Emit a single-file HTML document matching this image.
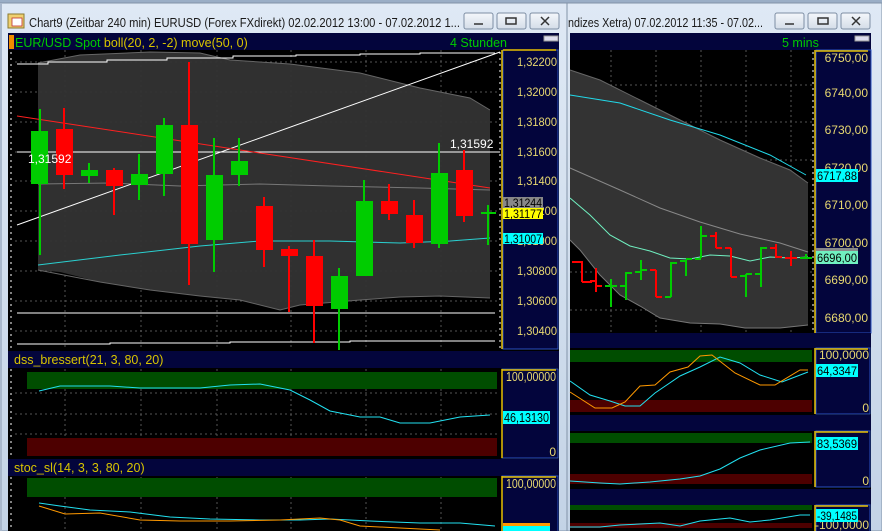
<!DOCTYPE html>
<html><head><meta charset="utf-8"><style>
html,body{margin:0;padding:0;background:#c8d6e6;}
svg{display:block;}
text{font-family:"Liberation Sans",sans-serif;}
</style></head><body>
<svg width="882" height="531" viewBox="0 0 882 531" xmlns="http://www.w3.org/2000/svg">
<defs>
<linearGradient id="tb" x1="0" y1="0" x2="0" y2="1"><stop offset="0" stop-color="#dfe9f5"/><stop offset="1" stop-color="#c3d3e6"/></linearGradient>
<linearGradient id="btn" x1="0" y1="0" x2="0" y2="1"><stop offset="0" stop-color="#f4f7fb"/><stop offset="1" stop-color="#d4dde8"/></linearGradient>
</defs>
<rect width="882" height="531" fill="#cdd9e7"/>
<rect x="0" y="0" width="882" height="4" fill="#9aaec6"/>
<rect x="560" y="3" width="322" height="528" fill="url(#tb)" stroke="#8293a8"/>
<rect x="0" y="3" width="567" height="528" fill="url(#tb)" stroke="#8293a8"/>
<rect x="0" y="3" width="2" height="528" fill="#a9b8cc"/>
<rect x="8" y="14" width="16" height="14" fill="#f0d070" stroke="#8a7a30"/>
<rect x="12" y="18" width="10" height="8" fill="#fff" stroke="#c03030" stroke-width="0.8"/>
<text x="29" y="27" font-size="13" fill="#1a1a1a" textLength="431" lengthAdjust="spacingAndGlyphs">Chart9 (Zeitbar 240 min)  EURUSD (Forex FXdirekt) 02.02.2012 13:00 - 07.02.2012 1...</text>
<text x="568" y="27" font-size="13" fill="#1a1a1a" textLength="195" lengthAdjust="spacingAndGlyphs">ndizes Xetra) 07.02.2012 11:35 - 07.02...</text>
<g stroke="#7d8ea4" fill="url(#btn)">
<rect x="464" y="13" width="29" height="16" rx="2"/><rect x="497" y="13" width="29" height="16" rx="2"/><rect x="530" y="13" width="29" height="16" rx="2"/>
<rect x="775" y="13" width="29" height="16" rx="2"/><rect x="808" y="13" width="29" height="16" rx="2"/><rect x="841" y="13" width="29" height="16" rx="2"/>
</g>
<g fill="none" stroke="#333" stroke-width="1.5">
<path d="M474 24h9"/><rect x="506" y="18" width="10" height="6"/><path d="M541 17l8 8M549 17l-8 8"/>
<path d="M785 24h9"/><rect x="818" y="18" width="10" height="6"/><path d="M852 17l8 8M860 17l-8 8"/>
</g>

<rect x="8" y="33" width="551" height="498" fill="#000"/>
<rect x="8" y="33" width="551" height="17" fill="#03053c"/>
<rect x="9" y="35" width="5" height="14" fill="#f08c00"/>
<text x="15" y="47" font-size="12.5" fill="#00cc00">EUR/USD Spot <tspan fill="#d8c400">boll(20, 2, -2) move(50, 0)</tspan></text>
<text x="450" y="47" font-size="12.5" fill="#00cc00">4 Stunden</text>
<rect x="544" y="36" width="14" height="5" fill="#dde" stroke="#999"/>
<g stroke="#fff" stroke-dasharray="2,4"><path d="M11 52V350"/></g>
<g stroke="#555" stroke-dasharray="2,3" stroke-width="1">
<path d="M65 50V350M141 50V350M217 50V350M291 50V350M366 50V350M441 50V350"/>
<path d="M15 62H500M15 92H500M15 122H500M15 152H500M15 181H500M15 211H500M15 241H500M15 271H500M15 301H500M15 331H500"/>
</g>
<path d="M38 63L80 55 150 52 200 53 230 60 290 64 360 73 420 88 470 98 490 110 L490 298 440 296 400 297 360 300 300 305 280 310 240 300 200 296 150 290 100 282 60 272 38 270Z" fill="#333" opacity="0.95"/>
<path d="M38 63L80 55 150 52 200 53 230 60 290 64 360 73 420 88 470 98 490 110" fill="none" stroke="#666"/>
<path d="M38 270L100 282 150 290 200 296 240 300 280 310 300 305 360 300 400 297 440 296 490 298" fill="none" stroke="#666"/>
<path d="M38 184L110 183 180 186 260 184 330 186 420 188 490 190" fill="none" stroke="#777"/>
<path d="M38 265L120 255 200 246 260 241 330 241 400 243 450 241 490 238" fill="none" stroke="#2ad0d0"/>
<path d="M17 64H48V62H107V60H167V58H233V56H296V55H360V54H420V53H495" fill="none" stroke="#fff"/>
<path d="M17 344H110V343H230V342H350V341H495" fill="none" stroke="#fff"/>
<path d="M17 313H495" stroke="#fff"/>
<path d="M17 152H500" stroke="#fff"/>
<path d="M17 225L500 52" stroke="#fff"/>
<path d="M17 116L490 188" stroke="#ff2020"/>
<g stroke-width="2">
<path d="M40 109V255" stroke="#00cc00"/><rect x="31" y="131" width="17" height="53" fill="#00cc00"/>
<path d="M64 108V189" stroke="#ff0000"/><rect x="56" y="129" width="17" height="46" fill="#ff0000"/>
<path d="M89 163V183" stroke="#00cc00"/><rect x="81" y="170" width="17" height="6" fill="#00cc00"/>
<path d="M114 168V215" stroke="#ff0000"/><rect x="106" y="170" width="17" height="16" fill="#ff0000"/>
<path d="M139 154V200" stroke="#00cc00"/><rect x="131" y="174" width="17" height="11" fill="#00cc00"/>
<path d="M164 118V196" stroke="#00cc00"/><rect x="156" y="125" width="17" height="49" fill="#00cc00"/>
<path d="M189 62V285" stroke="#ff0000"/><rect x="181" y="125" width="17" height="119" fill="#ff0000"/>
<path d="M214 138V272" stroke="#00cc00"/><rect x="206" y="175" width="17" height="65" fill="#00cc00"/>
<path d="M239 138V186" stroke="#00cc00"/><rect x="231" y="161" width="17" height="14" fill="#00cc00"/>
<path d="M264 197V267" stroke="#ff0000"/><rect x="256" y="206" width="17" height="44" fill="#ff0000"/>
<path d="M289 246V312" stroke="#ff0000"/><rect x="281" y="249" width="17" height="7" fill="#ff0000"/>
<path d="M314 240V343" stroke="#ff0000"/><rect x="306" y="256" width="17" height="50" fill="#ff0000"/>
<path d="M339 268V350" stroke="#00cc00"/><rect x="331" y="276" width="17" height="33" fill="#00cc00"/>
<path d="M364 180V276" stroke="#00cc00"/><rect x="356" y="201" width="17" height="75" fill="#00cc00"/>
<path d="M389 184V220" stroke="#ff0000"/><rect x="381" y="201" width="17" height="13" fill="#ff0000"/>
<path d="M414 200V248" stroke="#ff0000"/><rect x="406" y="215" width="17" height="28" fill="#ff0000"/>
<path d="M439 143V248" stroke="#00cc00"/><rect x="431" y="173" width="17" height="71" fill="#00cc00"/>
<path d="M464 150V222" stroke="#ff0000"/><rect x="456" y="170" width="17" height="46" fill="#ff0000"/>
<path d="M488 205V245" stroke="#00cc00"/><rect x="481" y="212" width="15" height="2" fill="#00cc00"/>
</g>
<text x="28" y="163" font-size="12" fill="#fff">1,31592</text>
<text x="450" y="148" font-size="12" fill="#fff">1,31592</text>
<rect x="503" y="50" width="55" height="299" fill="#03053c" stroke="#2a50c0"/>
<path d="M502 50V349" stroke="#e8c000" stroke-width="1.5"/>
<path d="M503 50H556" stroke="#e8c000" stroke-width="1.5"/>
<g stroke="#fff" stroke-dasharray="2,4"><path d="M500 52V349"/></g>
<g font-size="12" fill="#e8d870" text-anchor="end">
<text x="557" y="66" textLength="40" lengthAdjust="spacingAndGlyphs">1,32200</text><text x="557" y="96" textLength="40" lengthAdjust="spacingAndGlyphs">1,32000</text><text x="557" y="126" textLength="40" lengthAdjust="spacingAndGlyphs">1,31800</text><text x="557" y="156" textLength="40" lengthAdjust="spacingAndGlyphs">1,31600</text><text x="557" y="185" textLength="40" lengthAdjust="spacingAndGlyphs">1,31400</text><text x="557" y="215" textLength="40" lengthAdjust="spacingAndGlyphs">1,31200</text><text x="557" y="245" textLength="40" lengthAdjust="spacingAndGlyphs">1,31000</text><text x="557" y="275" textLength="40" lengthAdjust="spacingAndGlyphs">1,30800</text><text x="557" y="305" textLength="40" lengthAdjust="spacingAndGlyphs">1,30600</text><text x="557" y="335" textLength="40" lengthAdjust="spacingAndGlyphs">1,30400</text>
</g>
<rect x="503" y="197" width="40" height="11" fill="#888"/><text x="504" y="207" font-size="12" fill="#000" textLength="38" lengthAdjust="spacingAndGlyphs">1,31244</text>
<rect x="503" y="208" width="40" height="11" fill="#ffff00"/><text x="504" y="218" font-size="12" fill="#000" textLength="38" lengthAdjust="spacingAndGlyphs">1,31177</text>
<rect x="503" y="233" width="40" height="11" fill="#00ffff"/><text x="504" y="243" font-size="12" fill="#000" textLength="38" lengthAdjust="spacingAndGlyphs">1,31007</text>

<rect x="8" y="351" width="551" height="17" fill="#03053c"/>
<text x="14" y="364" font-size="12.5" fill="#d8c400">dss_bressert(21, 3, 80, 20)</text>
<g stroke="#555" stroke-dasharray="2,3"><path d="M65 369V458M141 369V458M217 369V458M291 369V458M366 369V458M441 369V458M15 393H500M15 414H500M15 434H500"/></g>
<rect x="27" y="372" width="470" height="17" fill="#004d00"/>
<rect x="27" y="438" width="470" height="18" fill="#4d0000"/>
<path d="M39 391L60 386 110 386 140 388 200 388 230 385 260 384 290 390 310 400 330 411 360 417 380 417 400 423 430 423 460 417 490 415" fill="none" stroke="#22e0f0"/>
<g stroke="#fff" stroke-dasharray="2,4"><path d="M11 369V458"/></g>
<rect x="502" y="369" width="56" height="89" fill="#03053c" stroke="#2a50c0"/>
<path d="M502 369V458M502 370H556" stroke="#e8c000" stroke-width="1.5"/>
<text x="556" y="381" font-size="13" fill="#e8d870" text-anchor="end" textLength="50" lengthAdjust="spacingAndGlyphs">100,00000</text>
<text x="556" y="456" font-size="12" fill="#e8d870" text-anchor="end">0</text>
<rect x="503" y="411" width="47" height="13" fill="#00ffff"/><text x="504" y="422" font-size="13" fill="#000" textLength="45" lengthAdjust="spacingAndGlyphs">46,13130</text>

<rect x="8" y="459" width="551" height="17" fill="#03053c"/>
<text x="14" y="472" font-size="12.5" fill="#d8c400">stoc_sl(14, 3, 3, 80, 20)</text>
<g stroke="#555" stroke-dasharray="2,3"><path d="M65 477V531M141 477V531M217 477V531M291 477V531M366 477V531M441 477V531"/></g>
<rect x="27" y="478" width="470" height="19" fill="#004d00"/>
<path d="M39 503L60 506 90 510 130 512 170 517 210 519 260 520 300 520 330 519 370 521 420 523 460 523 495 526" fill="none" stroke="#22e0f0"/>
<path d="M39 506L65 514 100 513 140 520 180 521 230 521 280 520 320 518 340 520 360 526 400 528 440 530" fill="none" stroke="#ff9900"/>
<g stroke="#fff" stroke-dasharray="2,4"><path d="M11 477V531"/></g>
<rect x="502" y="476" width="56" height="60" fill="#03053c" stroke="#2a50c0"/>
<path d="M502 476V531M502 477H556" stroke="#e8c000" stroke-width="1.5"/>
<text x="556" y="488" font-size="13" fill="#e8d870" text-anchor="end" textLength="50" lengthAdjust="spacingAndGlyphs">100,00000</text>
<rect x="503" y="523" width="47" height="3" fill="#ff9900"/>
<rect x="503" y="526" width="47" height="5" fill="#00ffff"/>

<rect x="570" y="33" width="301" height="498" fill="#000"/>
<rect x="570" y="33" width="301" height="17" fill="#03053c"/>
<text x="782" y="47" font-size="12.5" fill="#00cc00">5 mins</text>
<rect x="855" y="36" width="14" height="5" fill="#dde" stroke="#999"/>
<g stroke="#555" stroke-dasharray="2,3"><path d="M611 50V333M656 50V333M701 50V333M746 50V333M791 50V333M570 85H812M570 122H812M570 160H812M570 197H812M570 235H812M570 272H812M570 310H812"/></g>
<path d="M570 70L600 80 640 100 680 120 720 140 760 158 790 170 808 183L808 325 780 328 745 328 720 324 690 323 660 318 640 306 620 295 600 275 580 250 570 240Z" fill="#333"/>
<path d="M570 70L600 80 640 100 680 120 720 140 760 158 790 170 808 183" fill="none" stroke="#666"/>
<path d="M570 240L580 250 600 275 620 295 640 306 660 318 690 323 720 324 745 328 780 328 808 325" fill="none" stroke="#777"/>
<path d="M570 168L620 190 660 208 700 222 740 234 780 243 808 252" fill="none" stroke="#888"/>
<path d="M570 95L620 103 670 120 720 135 770 155 806 175" fill="none" stroke="#22d8e8"/>
<path d="M570 198L590 215 610 235 630 246 650 251 670 258 690 259 710 255 730 256 750 261 770 257 790 258 808 257" fill="none" stroke="#70f0c0"/>
<g stroke-width="2" fill="none">
<path d="M572 262H582V282M582 282V262M582 282H592" stroke="#ff0000"/>
<path d="M596 268V292M590 281H596M596 286H602" stroke="#ff0000"/>
<path d="M611 279V307M605 286H611M611 286H617" stroke="#00cc00"/>
<path d="M626 272V300M620 286H626M626 273H632" stroke="#00cc00"/>
<path d="M641 260V280M635 272H641M641 270H647" stroke="#00cc00"/>
<path d="M656 270V297M650 270H656M656 297H662" stroke="#ff0000"/>
<path d="M671 262V297M665 297H671M671 263H677" stroke="#00cc00"/>
<path d="M686 260V276M680 261H686M686 259H692" stroke="#00cc00"/>
<path d="M701 226V258M695 259H701M701 236H707" stroke="#00cc00"/>
<path d="M716 232V248M710 236H716M716 248H722" stroke="#ff0000"/>
<path d="M731 248V277M725 248H731M731 277H737" stroke="#ff0000"/>
<path d="M746 274V297M740 276H746M746 274H752" stroke="#00cc00"/>
<path d="M761 247V287M755 274H761M761 248H767" stroke="#00cc00"/>
<path d="M776 244V258M770 248H776M776 257H782" stroke="#ff0000"/>
<path d="M791 251V266M785 258H791M791 258H797" stroke="#ff0000"/>
<path d="M806 254V258M800 258H812" stroke="#00cc00"/>
</g>
<rect x="816" y="50" width="55" height="283" fill="#03053c" stroke="#2a50c0"/>
<path d="M815 50V333M816 51H868" stroke="#e8c000" stroke-width="1.5"/>
<g stroke="#fff" stroke-dasharray="2,4"><path d="M813 52V333"/></g>
<g font-size="12" fill="#e8d870" text-anchor="end">
<text x="868" y="62">6750,00</text><text x="868" y="97">6740,00</text><text x="868" y="134">6730,00</text><text x="868" y="172">6720,00</text><text x="868" y="209">6710,00</text><text x="868" y="247">6700,00</text><text x="868" y="284">6690,00</text><text x="868" y="322">6680,00</text>
</g>
<rect x="816" y="169" width="42" height="13" fill="#00ffff"/><text x="817" y="180" font-size="12" fill="#000" textLength="40" lengthAdjust="spacingAndGlyphs">6717,88</text>
<rect x="816" y="248" width="42" height="8" fill="#888"/>
<rect x="816" y="251" width="42" height="13" fill="#70f0c0"/><text x="817" y="262" font-size="12" fill="#000" textLength="40" lengthAdjust="spacingAndGlyphs">6696,00</text>

<rect x="570" y="333" width="301" height="15" fill="#03053c"/>
<rect x="570" y="350" width="242" height="12" fill="#004d00"/>
<rect x="570" y="400" width="242" height="12" fill="#4d0000"/>
<path d="M570 381L590 395 610 401 625 406 640 406 655 393 680 376 700 367 720 357 740 363 760 375 782 382 808 372" fill="none" stroke="#22e0f0"/>
<path d="M570 392L595 408 612 408 625 402 640 386 655 385 670 372 688 367 700 356 712 355 735 373 760 385 775 385 800 370 808 370" fill="none" stroke="#ff9900"/>
<rect x="816" y="348" width="54" height="66" fill="#03053c" stroke="#2a50c0"/>
<path d="M815 348V414M816 349H868" stroke="#e8c000" stroke-width="1.5"/>
<text x="869" y="359" font-size="12" fill="#e8d870" text-anchor="end">100,0000</text>
<text x="869" y="412" font-size="12" fill="#e8d870" text-anchor="end">0</text>
<rect x="816" y="364" width="42" height="13" fill="#00ffff"/><text x="817" y="375" font-size="12" fill="#000" textLength="40" lengthAdjust="spacingAndGlyphs">64,3347</text>
<rect x="570" y="415" width="301" height="16" fill="#03053c"/>
<rect x="570" y="433" width="242" height="10" fill="#004d00"/>
<rect x="570" y="474" width="242" height="10" fill="#4d0000"/>
<path d="M570 481L600 483 620 484 650 482 680 479 700 476 720 469 740 458 760 450 790 443 810 442" fill="none" stroke="#22e0f0"/>
<rect x="816" y="431" width="54" height="56" fill="#03053c" stroke="#2a50c0"/>
<path d="M815 431V487M816 432H868" stroke="#e8c000" stroke-width="1.5"/>
<text x="869" y="485" font-size="12" fill="#e8d870" text-anchor="end">0</text>
<rect x="816" y="437" width="42" height="13" fill="#00ffff"/><text x="817" y="448" font-size="12" fill="#000" textLength="40" lengthAdjust="spacingAndGlyphs">83,5369</text>
<rect x="570" y="489" width="301" height="16" fill="#03053c"/>
<rect x="570" y="505" width="242" height="5" fill="#004d00"/>
<rect x="570" y="523" width="242" height="5" fill="#4d0000"/>
<path d="M570 527L600 527 620 525 640 524 660 523 680 526 700 521 730 518 750 522 770 520 800 515 810 515" fill="none" stroke="#22e0f0"/>
<rect x="816" y="505" width="54" height="30" fill="#03053c" stroke="#2a50c0"/>
<path d="M815 505V531M816 506H868" stroke="#e8c000" stroke-width="1.5"/>
<text x="869" y="529" font-size="12" fill="#e8d870" text-anchor="end">-100,0000</text>
<rect x="816" y="509" width="42" height="13" fill="#00ffff"/><text x="817" y="520" font-size="12" fill="#000" textLength="40" lengthAdjust="spacingAndGlyphs">-39,1485</text>
</svg>
</body></html>
